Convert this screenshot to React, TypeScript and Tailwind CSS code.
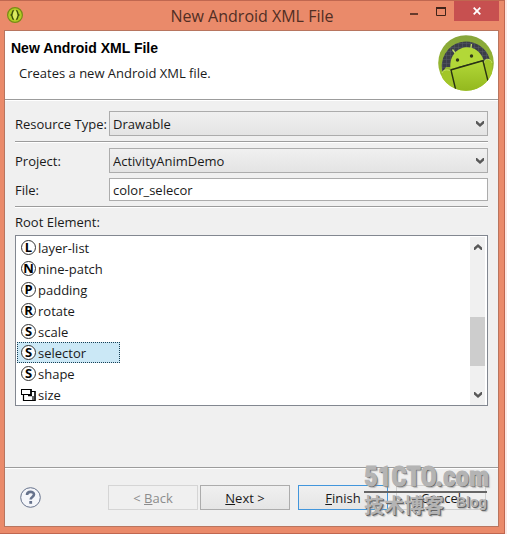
import { useState, type ReactNode } from "react";

const ITEMS = [
  { name: "layer-list", glyph: "L" },
  { name: "nine-patch", glyph: "N" },
  { name: "padding", glyph: "P" },
  { name: "rotate", glyph: "R" },
  { name: "scale", glyph: "S" },
  { name: "selector", glyph: "S" },
  { name: "shape", glyph: "S" },
  { name: "size", glyph: "" },
];

function Chevron({ up = false }: { up?: boolean }) {
  return (
    <svg width="8" height="6" viewBox="0 0 8 6" className={up ? "rotate-180" : ""} aria-hidden="true">
      <path d="M0 0H1L4 2.8L7 0H8V2.4L4 6L0 2.4Z" fill="#585858" />
    </svg>
  );
}

function Rule() {
  return <div className="h-0.5 shrink-0 border-t border-[#9c9c9c] bg-white" />;
}

function SelectBox({ id, value }: { id: string; value: string }) {
  return (
    <div className="relative min-w-0 flex-1">
      <select
        id={id}
        defaultValue={value}
        className="block h-[25px] w-full appearance-none border border-[#acacac] bg-linear-to-b from-[#f0f0f0] to-[#e4e4e4] px-[3px] outline-none"
      >
        <option>{value}</option>
      </select>
      <span className="pointer-events-none absolute top-[10px] right-1">
        <Chevron />
      </span>
    </div>
  );
}

function FieldRow({ id, label, children }: { id: string; label: string; children: ReactNode }) {
  return (
    <div className="flex items-center">
      <label htmlFor={id} className="w-[94px] shrink-0 whitespace-nowrap">
        {label}
      </label>
      {children}
    </div>
  );
}

function AppIcon() {
  return (
    <svg width="16" height="16" viewBox="0 0 16 16" aria-hidden="true">
      <circle cx="8" cy="8" r="7.4" fill="#b3cc26" stroke="#788b16" strokeWidth="1.2" />
      <ellipse cx="8" cy="8" rx="2" ry="4.5" fill="#dcea62" />
      <path
        d="M6.8 3.5C4.7 3.5 6 7 4.2 8C6 9 4.7 12.5 6.8 12.5M9.2 3.5C11.3 3.5 10 7 11.8 8C10 9 11.3 12.5 9.2 12.5"
        fill="none"
        stroke="#3c4e0c"
        strokeWidth="1.4"
      />
    </svg>
  );
}

function AndroidBadge() {
  return (
    <svg width="56" height="56" viewBox="0 0 56 56" role="img" aria-label="Android">
      <defs>
        <linearGradient id="rim" x1="0" y1="0" x2="0" y2="1">
          <stop offset="0" stopColor="#86a53c" />
          <stop offset="1" stopColor="#a2c428" />
        </linearGradient>
        <linearGradient id="robot" x1="0" y1="0" x2="0" y2="1">
          <stop offset="0" stopColor="#b2d838" />
          <stop offset="1" stopColor="#93b81e" />
        </linearGradient>
        <pattern id="mesh" width="4" height="4" patternUnits="userSpaceOnUse">
          <rect width="4" height="4" fill="#3b3e49" />
          <path d="M0 0H4M0 0V4" stroke="#565a66" />
        </pattern>
        <clipPath id="disc">
          <circle cx="28" cy="28" r="27.8" />
        </clipPath>
      </defs>
      <g clipPath="url(#disc)">
        <rect width="56" height="56" fill="url(#rim)" />
        <path d="M4.5 37A24 24 0 0 1 52 25L50 32H8Z" fill="url(#mesh)" />
        <path d="M14.5 14.5l4 5.5M33.5 9l-1 7" stroke="#c0dd6a" strokeWidth="1.3" />
        <path d="M12.5 34C9.5 10 39 4 45.5 25Z" fill="#b2d838" />
        <path d="M13 35L45 26L52 56H18Z" fill="url(#robot)" />
        <path d="M4 38c1-4 8-4 9-1l5 19H4zM46 28c0-5 7-5 8 0v28h-3z" fill="#a2c629" />
        <path d="M4 38c1-4 8-4 9-1M46 28c0-5 7-5 8 0" fill="none" stroke="#c2df63" />
        <path d="M12.5 35L45.5 25.5M13 35L17.5 54M45 26L50 46" stroke="#293313" strokeWidth="1.4" fill="none" />
        <circle cx="19.5" cy="25" r="1.7" fill="#303818" />
        <circle cx="33.5" cy="21" r="1.7" fill="#303818" />
      </g>
    </svg>
  );
}

function ItemIcon({ glyph }: { glyph: string }) {
  if (!glyph) {
    return (
      <svg width="15" height="15" viewBox="0 0 15 15" className="shrink-0" aria-hidden="true">
        <path d="M2.5 8V13.5H12V9" fill="none" stroke="#000" strokeWidth="1.2" />
        <rect x="0.5" y="2.5" width="9.5" height="5" fill="#fff" stroke="#000" />
        <path d="M10 2V9M7 8.5H11M14 4V14" stroke="#000" strokeWidth="1.6" />
        <path d="M10 4.5H14M12 13.5H14" stroke="#000" />
      </svg>
    );
  }
  return (
    <span
      aria-hidden="true"
      className="flex size-[15px] shrink-0 items-center justify-center rounded-full border border-[#333] bg-white font-['Open_Sans',sans-serif] text-[13px] leading-none font-bold text-black"
    >
      {glyph}
    </span>
  );
}

function Watermark() {
  return (
    <div
      aria-hidden="true"
      className="pointer-events-none absolute right-[11px] bottom-[9px] w-[123px] text-[#b4b4b4] [text-shadow:1px_1px_0_#666,2px_2px_1px_#8888]"
    >
      <div className="h-[28px] font-['Liberation_Sans_Narrow','Roboto_Condensed','Liberation_Sans',sans-serif] text-[27px] leading-[28px] font-bold whitespace-nowrap [-webkit-text-stroke:1px_#b4b4b4]">
        51CTO.com
      </div>
      <div className="h-0.5 bg-[#666]" />
      <div className="flex items-start justify-between font-bold">
        <span className="font-['Noto_Sans_CJK_SC',sans-serif] text-[20px] leading-6">技术博客</span>
        <span className="font-['Liberation_Sans',sans-serif] text-[14px]">Blog</span>
      </div>
    </div>
  );
}

export default function App() {
  const [selected, setSelected] = useState("selector");
  return (
    <div className="bg-[#fbe9e5] pr-0.5 font-['Open_Sans','Noto_Sans',sans-serif] text-[13px] leading-[18px] text-[#1a1a1a]">
      <main className="border-y border-r border-[#c06750] bg-[#ea8a6a] pb-[6px]">
        <header className="relative flex h-[29px] items-center justify-center">
          <span className="absolute top-[6px] left-[7px]">
            <AppIcon />
          </span>
          <h1 className="text-base text-[#512e24]">New Android XML File</h1>
          <div className="absolute top-0 right-[5px] flex">
            <button aria-label="Minimize" className="flex h-5 w-[27px] items-center justify-center">
              <svg width="8" height="14" viewBox="0 0 8 14">
                <path d="M0 10h8" stroke="#673a2c" strokeWidth="2" />
              </svg>
            </button>
            <button aria-label="Maximize" className="flex h-5 w-[27px] items-center justify-center">
              <svg width="10" height="9" viewBox="0 0 10 9">
                <path d="M.5 1V8.5H9.5V1" fill="none" stroke="#40241a" />
                <path d="M0 1H10" stroke="#40241a" strokeWidth="2" />
              </svg>
            </button>
            <button aria-label="Close" className="flex h-5 w-[45px] items-center justify-center bg-[#c75050]">
              <svg width="8" height="8" viewBox="0 0 8 8">
                <path d="M.7.7L7.3 7.3M7.3.7L.7 7.3" stroke="#fff" strokeWidth="1.8" />
              </svg>
            </button>
          </div>
        </header>

        <div className="mr-[5px] ml-1 border border-[#b8755f] bg-[#f0f0f0]">
          <section className="flex h-[68px] justify-between bg-white pt-1 pr-1 pl-[6px]">
            <div>
              <h2 className="pt-1 font-['Liberation_Sans',sans-serif] text-[14px] font-bold text-black">
                New Android XML File
              </h2>
              <p className="pt-[7px] pl-2">Creates a new Android XML file.</p>
            </div>
            <AndroidBadge />
          </section>
          <Rule />

          <div className="flex flex-col gap-[5px] px-[10px] pt-[10px] pb-[61px]">
            <FieldRow id="type" label="Resource Type:">
              <SelectBox id="type" value="Drawable" />
            </FieldRow>
            <Rule />
            <FieldRow id="project" label="Project:">
              <SelectBox id="project" value="ActivityAnimDemo" />
            </FieldRow>
            <FieldRow id="file" label="File:">
              <input
                id="file"
                defaultValue="color_selecor"
                className="h-[23px] min-w-0 flex-1 border border-[#acacac] bg-white px-[3px] outline-none"
              />
            </FieldRow>
            <Rule />
            <div>
              <div id="root-element" className="pb-1">
                Root Element:
              </div>
              <div className="flex border border-[#828790] bg-white pt-px">
                <div role="listbox" aria-labelledby="root-element" className="flex-1 pl-px">
                  {ITEMS.map((item) => (
                    <button
                      key={item.name}
                      role="option"
                      aria-selected={selected === item.name}
                      onClick={() => setSelected(item.name)}
                      className={`flex h-[21px] w-[103px] items-center gap-0.5 border pl-[3px] ${
                        selected === item.name
                          ? "border-dotted border-[#173f55] bg-[#cbe8f6]"
                          : "border-transparent"
                      }`}
                    >
                      <ItemIcon glyph={item.glyph} />
                      {item.name}
                    </button>
                  ))}
                </div>
                <div className="mr-0.5 flex w-[15px] flex-col items-center bg-[#f0f0f0] py-[7px]">
                  <Chevron up />
                  <div className="mt-[67px] h-[49px] w-full bg-[#cdcdcd]" />
                  <div className="mt-auto">
                    <Chevron />
                  </div>
                </div>
              </div>
            </div>
          </div>

          <Rule />
          <footer className="relative flex items-center pt-4 pr-3 pb-4 pl-[10px]">
            <button aria-label="Help" className="ml-[5px]">
              <svg width="21" height="21" viewBox="0 0 21 21">
                <circle cx="10.5" cy="10.5" r="9.8" fill="#f5f6fa" stroke="#66728c" />
                <path d="M7 8C7 3.8 14 4 14 7.6C14 10 10.7 10 10.7 12.5" fill="none" stroke="#66728c" strokeWidth="2.6" />
                <rect x="9.3" y="14" width="2.8" height="2.8" fill="#66728c" />
              </svg>
            </button>
            <div className="ml-auto flex gap-2">
              <div className="flex gap-0.5">
                <button disabled className="h-[25px] w-[90px] border border-[#d5d5d5] text-center text-[#8c8c8c]">
                  &lt; <u>B</u>ack
                </button>
                <button className="h-[25px] w-[90px] border border-[#acacac] bg-linear-to-b from-[#f0f0f0] to-[#e5e5e5] text-center">
                  <u>N</u>ext &gt;
                </button>
              </div>
              <button className="h-[25px] w-[90px] border border-[#4296dc] bg-linear-to-b from-[#f0f0f0] to-[#e5e5e5] text-center">
                <u>F</u>inish
              </button>
              <button className="h-[25px] w-[90px] border border-[#d0d0d0] text-center">Cancel</button>
            </div>
            <Watermark />
          </footer>
        </div>
      </main>
    </div>
  );
}
